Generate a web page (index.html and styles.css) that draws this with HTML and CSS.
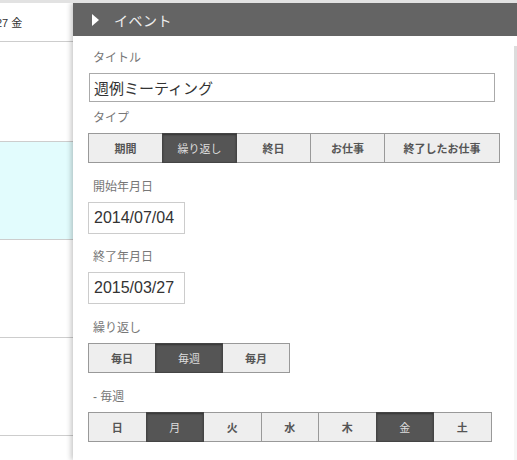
FILE: index.html
```html
<!DOCTYPE html>
<html lang="ja">
  <head>
    <meta charset="UTF-8" />
    <meta name="viewport" content="width=device-width, initial-scale=1" />
    <title>イベント</title>
    <link rel="stylesheet" href="styles.css">
  </head>
  <body>
    <div class="page">
      <div class="day-list">
        <div class="day-row day-head"><span class="day-label">27 金</span></div>
        <div class="day-row"></div>
        <div class="day-row today"></div>
        <div class="day-row"></div>
        <div class="day-row"></div>
        <div class="day-row"></div>
      </div>

      <div class="event-panel">
        <div class="panel-header">
          <span class="arrow"></span>
          <span class="panel-title">イベント</span>
        </div>
        <div class="panel-body">
          <div class="event-form">
            <div class="field tight">
              <div class="field-label">タイトル</div>
              <input class="text-input" type="text" value="週例ミーティング" />
            </div>
            <div class="field">
              <div class="field-label">タイプ</div>
              <div class="btn-group">
                <button class="seg w-type">期間</button>
                <button class="seg w-type active">繰り返し</button>
                <button class="seg w-type">終日</button>
                <button class="seg w-type">お仕事</button>
                <button class="seg w-wide">終了したお仕事</button>
              </div>
            </div>
            <div class="field date">
              <div class="field-label">開始年月日</div>
              <input class="date-input" type="text" value="2014/07/04" />
            </div>
            <div class="field">
              <div class="field-label">終了年月日</div>
              <input class="date-input" type="text" value="2015/03/27" />
            </div>
            <div class="field">
              <div class="field-label">繰り返し</div>
              <div class="btn-group">
                <button class="seg w-repeat">毎日</button>
                <button class="seg w-repeat active">毎週</button>
                <button class="seg w-repeat">毎月</button>
              </div>
            </div>
            <div class="field">
              <div class="field-label">- 毎週</div>
              <div class="btn-group">
                <button class="seg w-day">日</button>
                <button class="seg w-day active">月</button>
                <button class="seg w-day">火</button>
                <button class="seg w-day">水</button>
                <button class="seg w-day">木</button>
                <button class="seg w-day active">金</button>
                <button class="seg w-day">土</button>
              </div>
            </div>
          </div>
          <div class="scrollbar"><div class="thumb"></div></div>
        </div>
      </div>
    </div>
  </body>
</html>
```

FILE: styles.css
```css
body {
  margin: 0;
  padding: 0;
  font-family: "Liberation Sans", "Noto Sans CJK JP", sans-serif;
  background-color: #e2e2e2;
  overflow: hidden;
}

.page {
  display: flex;
  margin-top: 3px;
  height: 457px;
  overflow: hidden;
}

.day-list {
  width: 73px;
  flex-shrink: 0;
  background-color: white;
}

.day-row {
  height: 97px;
  border-bottom: 1px solid #cdcdcd;
}

.day-row.day-head {
  height: 38px;
  display: flex;
  align-items: center;
}

.day-row.day-head + .day-row {
  height: 99px;
}

.day-label {
  margin-left: -4px;
  font-size: 11px;
  color: #333;
}

.day-row.today {
  background-color: #e2fcfd;
}

.event-panel {
  flex: 1;
  background-color: white;
  box-shadow: -2px 0 5px rgba(0, 0, 0, 0.22);
  position: relative;
  display: flex;
  flex-direction: column;
}

.panel-header {
  height: 33px;
  background-color: #646464;
  display: flex;
  align-items: center;
  padding-left: 19px;
}

.arrow {
  width: 0;
  height: 0;
  border-top: 6px solid transparent;
  border-bottom: 6px solid transparent;
  border-left: 7px solid white;
}

.panel-title {
  margin-left: 15px;
  font-size: 14px;
  color: #eee;
  letter-spacing: 0.5px;
}

.panel-body {
  flex: 1;
  display: flex;
}

.event-form {
  flex: 1;
  padding: 14px 0 0 15px;
}

.scrollbar {
  width: 3px;
  margin-top: 10px;
  background-color: #f6f6f6;
}

.thumb {
  height: 154px;
  background-color: #dcdcdc;
}

.field {
  margin-bottom: 16px;
}

.field.tight {
  margin-bottom: 8px;
}

.field.date {
  margin-bottom: 15px;
}

.field-label {
  font-size: 12px;
  line-height: 16px;
  color: #777;
  margin-left: 5px;
  margin-bottom: 7px;
}

.text-input {
  box-sizing: border-box;
  width: 406px;
  height: 29px;
  margin-left: 1px;
  padding: 0 4px;
  border: 1px solid #aaa;
  font-family: "Noto Sans CJK JP", sans-serif;
  font-size: 15px;
  color: #333;
  outline: none;
}

.date-input {
  box-sizing: border-box;
  width: 97px;
  height: 32px;
  padding: 0 5px;
  border: 1px solid #ccc;
  font-family: "Liberation Sans", sans-serif;
  font-size: 16px;
  color: #333;
  outline: none;
}

.btn-group {
  display: flex;
}

.seg {
  box-sizing: border-box;
  height: 30px;
  padding: 0;
  margin-left: -1px;
  background-color: #eee;
  border: 1px solid #999;
  font-family: "Noto Sans CJK JP", sans-serif;
  font-size: 11px;
  font-weight: bold;
  color: #555;
}

.seg:first-child {
  margin-left: 0;
}

.seg.active {
  background-color: #555;
  border-color: #444;
  color: #ddd;
  font-weight: normal;
  box-shadow: inset 0 1px 2px rgba(0, 0, 0, 0.4);
  position: relative;
}

.w-type {
  width: 75px;
}

.w-wide {
  width: 116px;
}

.w-repeat {
  width: 68px;
}

.w-day {
  width: 58.5px;
}
```
